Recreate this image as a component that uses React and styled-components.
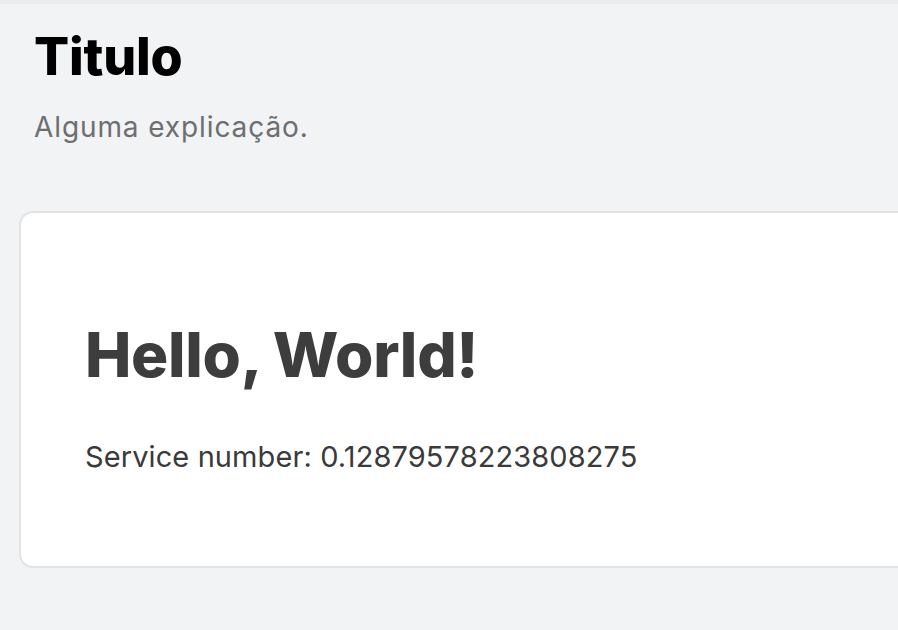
import React from 'react'
import styled, { createGlobalStyle } from 'styled-components'

const GlobalStyle = createGlobalStyle`
  html, body {
    margin: 0;
    padding: 0;
    background: #f2f3f5;
    overflow: hidden;
  }
  body {
    font-family: Inter, "Noto Sans", sans-serif;
  }
`

const Page = styled.div`
  min-height: 630px;
  border-top: 4px solid #ebecee;
  box-sizing: border-box;
`

const Header = styled.header`
  padding: 22px 35px 0 34px;
`

const Title = styled.h1`
  margin: 0;
  font-size: 52px;
  line-height: 62px;
  font-weight: 800;
  letter-spacing: -0.2px;
  color: #000;
`

const Subtitle = styled.p`
  margin: 22px 0 0 0;
  font-size: 28px;
  line-height: 34px;
  font-weight: 400;
  letter-spacing: 0.9px;
  color: #6e6e70;
`

const Card = styled.section`
  margin: 67px 0 0 19px;
  height: 357px;
  box-sizing: border-box;
  background: #fff;
  border: 2px solid #e2e3e5;
  border-right: none;
  border-radius: 14px 0 0 14px;
  padding: 109px 66px 0 64px;
`

const CardTitle = styled.h2`
  margin: 0;
  font-size: 62px;
  line-height: 66px;
  font-weight: 800;
  letter-spacing: -0.3px;
  color: #3d3d3d;
`

const CardText = styled.p`
  margin: 52px 0 0 0;
  font-size: 29px;
  line-height: 34px;
  font-weight: 400;
  letter-spacing: 0.1px;
  color: #3a3a3a;
`

export default function App() {
  return (
    <Page>
      <GlobalStyle />
      <Header>
        <Title>Titulo</Title>
        <Subtitle>Alguma explicação.</Subtitle>
      </Header>
      <Card>
        <CardTitle>Hello, World!</CardTitle>
        <CardText>Service number: 0.12879578223808275</CardText>
      </Card>
    </Page>
  )
}
